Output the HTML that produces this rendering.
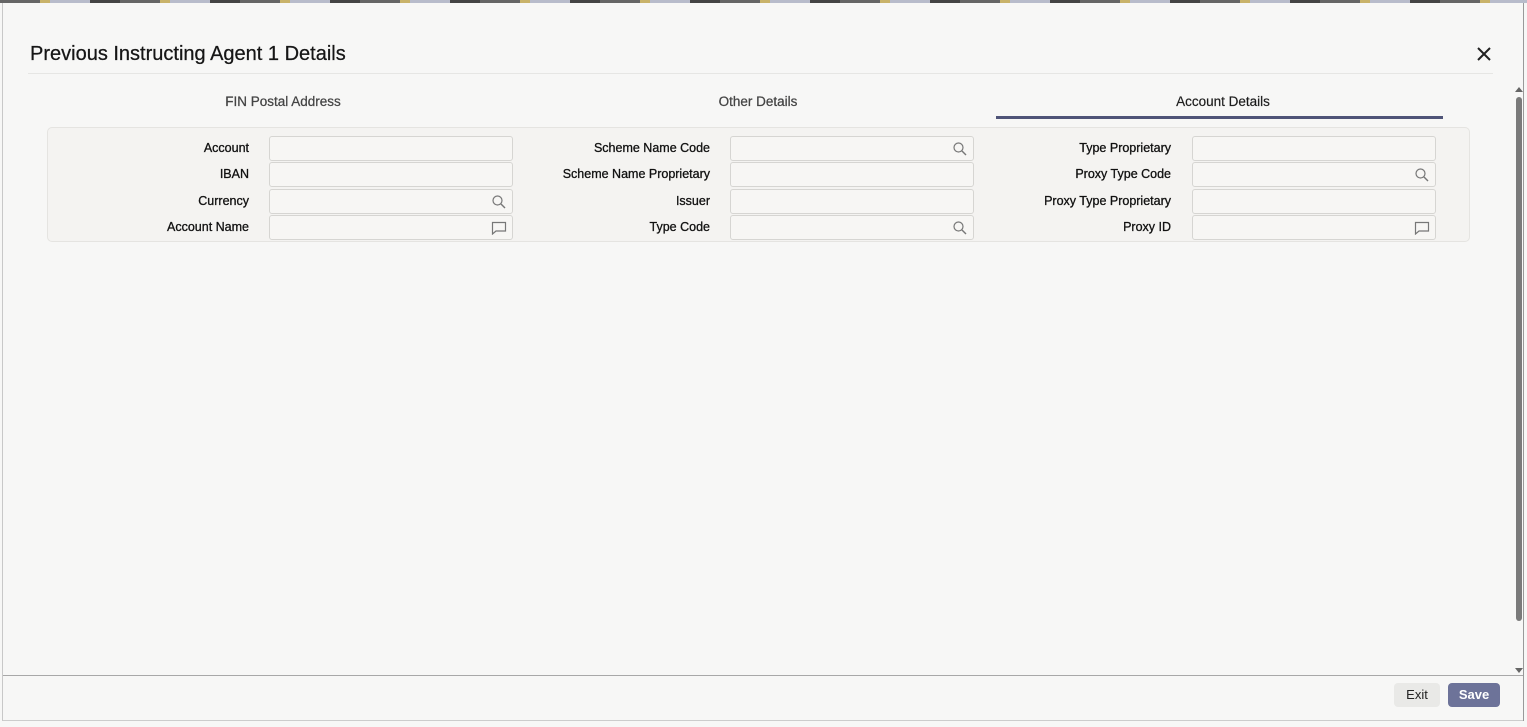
<!DOCTYPE html>
<html><head><style>
body{margin:0;width:1527px;height:727px;overflow:hidden;background:#f7f7f6;font-family:"Liberation Sans",sans-serif;position:relative}
.abs{position:absolute}
.top{left:0;top:0;width:1527px;height:3px;background:repeating-linear-gradient(90deg,#666 0 40px,#c9b36a 40px 50px,#b8bccb 50px 90px,#444 90px 120px)}
.title{left:30px;top:43px;font-size:20px;color:#161616;-webkit-text-stroke:0.25px #161616}
.lbl{font-size:12.5px;color:#111;text-align:right;width:220px;-webkit-text-stroke:0.3px #111}
.inp{width:242px;height:23px;border:1px solid #d6d5d2;border-radius:3px;background:#f7f6f4}
.tab{font-size:13.5px;color:#444;text-align:center;width:300px;-webkit-text-stroke:0.25px #444}
</style></head><body>
<div class="abs top"></div>
<div class="abs" style="left:2px;top:3px;width:1px;height:718px;background:#c8c8c8"></div>
<div class="abs" style="left:1523px;top:3px;width:1px;height:718px;background:#999"></div>
<div class="abs title">Previous Instructing Agent 1 Details</div>
<svg class="abs" style="left:1477px;top:47px" width="14" height="14"><path d="M1 1L13 13M13 1L1 13" stroke="#222" stroke-width="2"/></svg>
<div class="abs" style="left:28px;top:73px;width:1465px;height:1px;background:#e6e6e4"></div>
<div class="abs tab" style="left:133px;top:94px">FIN Postal Address</div>
<div class="abs tab" style="left:608px;top:94px">Other Details</div>
<div class="abs tab" style="left:1073px;top:94px;color:#161616">Account Details</div>
<div class="abs" style="left:996px;top:116px;width:447px;height:3px;background:#4f5478"></div>
<div class="abs" style="left:47px;top:127px;width:1421px;height:113px;border:1px solid #e5e4e1;border-radius:5px;background:#f4f3f1"></div>
<div id="f"></div>
<div class="abs" style="left:1516px;top:97px;width:6px;height:524px;background:#7a7a7a;border-radius:3px"></div>
<div class="abs" style="left:1515px;top:87px;width:0;height:0;border-left:4px solid transparent;border-right:4px solid transparent;border-bottom:5px solid #666"></div>
<div class="abs" style="left:1515px;top:668px;width:0;height:0;border-left:4px solid transparent;border-right:4px solid transparent;border-top:5px solid #666"></div>
<div class="abs" style="left:3px;top:675px;width:1520px;height:1px;background:#a8a8a8"></div>
<div class="abs" style="left:3px;top:720px;width:1520px;height:1px;background:#ccc"></div>
<div class="abs" style="left:1394px;top:683px;width:46px;height:24px;background:#e9e9e7;border-radius:4px;font-size:13px;color:#222;text-align:center;line-height:24px">Exit</div>
<div class="abs" style="left:1448px;top:683px;width:52px;height:24px;background:#6d7399;border-radius:4px;font-size:13px;color:#fff;text-align:center;line-height:24px;font-weight:bold">Save</div>
<script>
var cols=[[249,269,["Account","IBAN","Currency","Account Name"],[0,0,"s","c"]],[710,730,["Scheme Name Code","Scheme Name Proprietary","Issuer","Type Code"],["s",0,0,"s"]],[1171,1192,["Type Proprietary","Proxy Type Code","Proxy Type Proprietary","Proxy ID"],[0,"s",0,"c"]]];
var tops=[136,162,189,215],h="";
var S='<svg width="14" height="14" style="position:absolute;right:6px;top:5px"><circle cx="5.5" cy="5.5" r="4.5" fill="none" stroke="#777" stroke-width="1.2"/><path d="M9 9L13 13" stroke="#777" stroke-width="1.4"/></svg>';
var C='<svg width="16" height="14" style="position:absolute;right:5px;top:5px"><path d="M1.5 1.5H14.5V10H5L1.5 13Z" fill="none" stroke="#777" stroke-width="1.2"/></svg>';
cols.forEach(function(c){c[2].forEach(function(l,i){var t=tops[i];
h+='<div class="abs lbl" style="left:'+(c[0]-220)+'px;top:'+(t+5)+'px">'+l+'</div>';
h+='<div class="abs inp" style="left:'+c[1]+'px;top:'+t+'px">'+(c[3][i]=="s"?S:c[3][i]=="c"?C:"")+'</div>';});});
document.getElementById("f").innerHTML=h;
</script>
</body></html>
